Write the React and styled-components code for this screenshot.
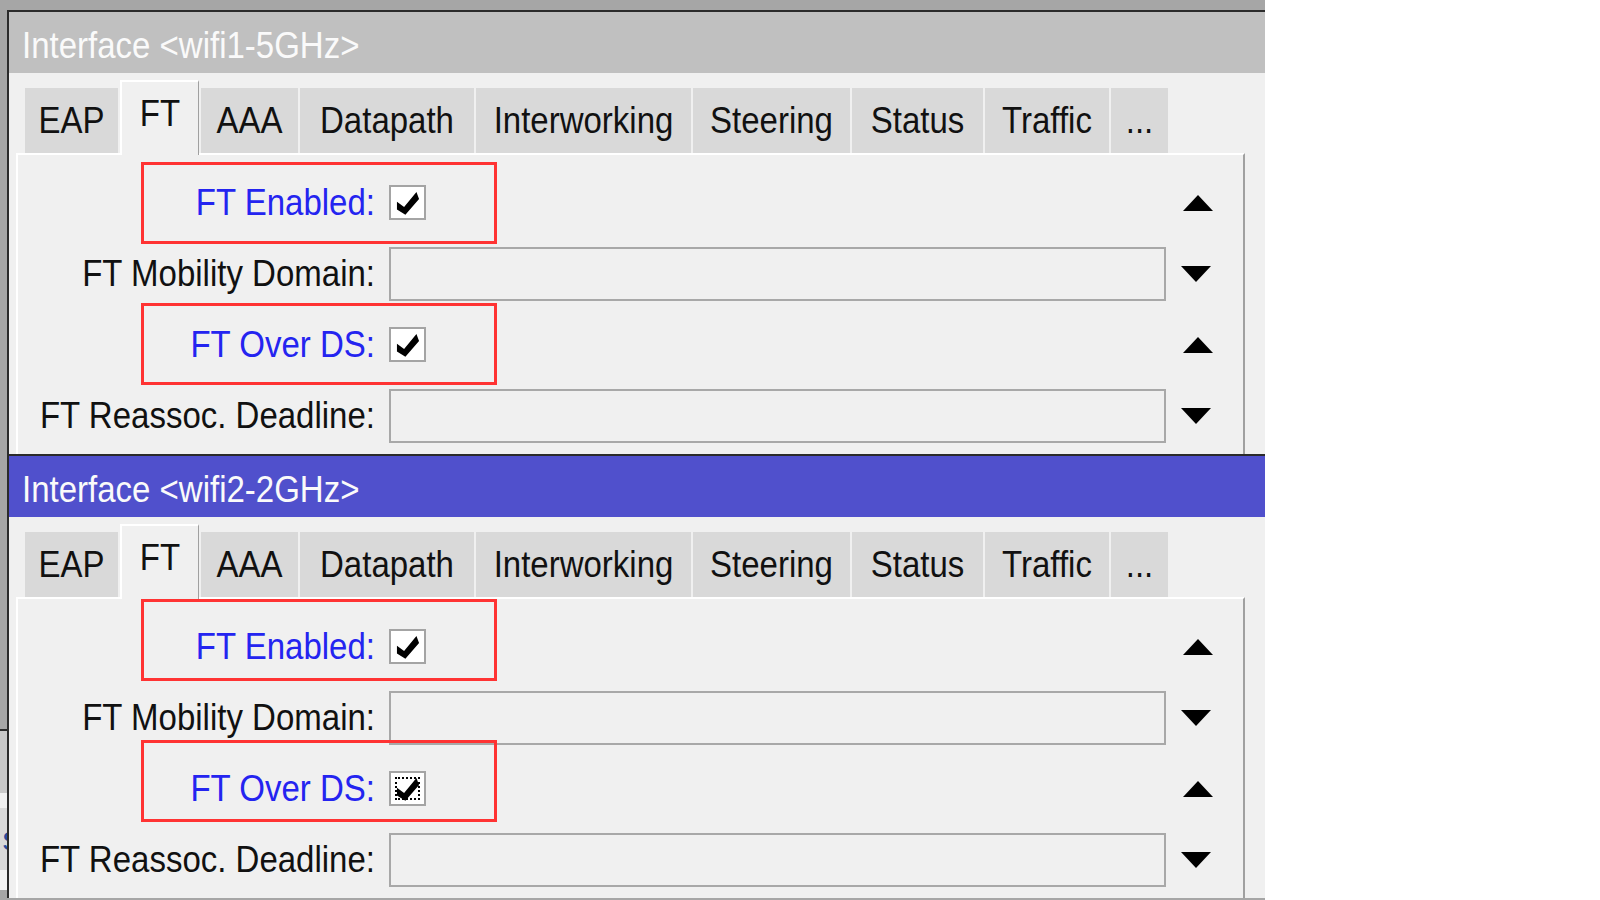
import React from 'react'
import styled, { createGlobalStyle } from 'styled-components'

const GlobalStyle = createGlobalStyle`
  html, body {
    margin: 0;
    padding: 0;
    background: #ffffff;
  }
  body {
    font-family: "Liberation Sans", Arial, sans-serif;
  }
`

const tabs = [
  { name: 'EAP', width: 93 },
  { name: 'FT', width: 79, selected: true },
  { name: 'AAA', width: 97 },
  { name: 'Datapath', width: 174 },
  { name: 'Interworking', width: 215 },
  { name: 'Steering', width: 157 },
  { name: 'Status', width: 131 },
  { name: 'Traffic', width: 124 },
  { name: '...', width: 57 },
]

const Desk = styled.div`
  width: 1265px;
  height: 900px;
  background: #a6a6a6;
  display: flex;
  overflow: hidden;
`

const SideStrip = styled.div`
  width: 7px;
  flex-shrink: 0;
  display: flex;
  flex-direction: column;
  overflow: hidden;
`

const StripPiece = styled.div`
  height: ${p => p.h}px;
  background: ${p => p.bg};
  flex-shrink: 0;
  overflow: hidden;
  display: flex;
  align-items: center;
  justify-content: flex-end;
`

const PeekChar = styled.span`
  font-size: 33px;
  color: #2a4a9a;
  margin-right: -12px;
`

const Stack = styled.div`
  flex: 1;
  padding-top: 10px;
  display: flex;
  flex-direction: column;
`

const Window = styled.section`
  height: 444px;
  flex-shrink: 0;
  box-sizing: border-box;
  border-top: 2px solid #2b2b2b;
  border-left: 2px solid #2b2b2b;
  background: #f0f0f0;
  display: flex;
  flex-direction: column;
  overflow: hidden;
`

// the screenshot text is a little taller than Arial at the same width
const Txt = styled.span`
  display: inline-block;
  transform: scaleY(1.1);
  white-space: nowrap;
`

const TitleBar = styled.div`
  height: 61px;
  flex-shrink: 0;
  box-sizing: border-box;
  padding: 7px 0 0 13px;
  display: flex;
  align-items: center;
  background: ${p => (p.$active ? '#5050cc' : '#c0c0c0')};
  color: #fafafa;
  font-size: 33px;
`

const TabStrip = styled.div`
  height: 80px;
  flex-shrink: 0;
  box-sizing: border-box;
  padding: 7px 0 0 16px;
  display: flex;
  align-items: flex-end;
  gap: 2px;
`

const Tab = styled.div`
  width: ${p => p.$w}px;
  height: ${p => (p.$selected ? 75 : 65)}px;
  margin-bottom: ${p => (p.$selected ? -2 : 0)}px;
  box-sizing: border-box;
  display: flex;
  align-items: center;
  justify-content: center;
  padding-bottom: ${p => (p.$selected ? 10 : 0)}px;
  background: ${p => (p.$selected ? '#f0f0f0' : '#d9d9d9')};
  border-top: ${p => (p.$selected ? '2px solid #ffffff' : 'none')};
  border-left: ${p => (p.$selected ? '2px solid #ffffff' : 'none')};
  border-right: ${p => (p.$selected ? '1px solid #a0a0a0' : 'none')};
  position: relative;
  z-index: ${p => (p.$selected ? 1 : 0)};
  font-size: 33px;
  color: #111;
`

const Panel = styled.div`
  flex: 1;
  margin-left: 7px;
  width: 1229px;
  box-sizing: border-box;
  border-top: 2px solid #ffffff;
  border-left: 2px solid #ffffff;
  border-right: 2px solid #a0a0a0;
  padding-top: 12px;
  display: flex;
  flex-direction: column;
`

const Row = styled.div`
  height: 71px;
  flex-shrink: 0;
  position: relative;
  display: grid;
  grid-template-columns: 357px 777px 34px;
  column-gap: 14px;
  align-items: center;
`

const Label = styled.label`
  text-align: right;
  font-size: 33px;
  color: ${p => (p.$blue ? '#2424f0' : '#111')};
`

const CheckBox = styled.div`
  width: 37px;
  height: 35px;
  box-sizing: border-box;
  border: 2px solid #a4a4a4;
  background: #ffffff;
  position: relative;
  display: flex;
  align-items: center;
  justify-content: center;
`

const FocusRing = styled.div`
  position: absolute;
  inset: 4px;
  border: 2px dotted #000;
`

const CheckMark = styled.svg`
  width: 26px;
  height: 26px;
  position: relative;
`

const Field = styled.div`
  height: 54px;
  box-sizing: border-box;
  border: 2px solid #a8a8a8;
  background: #f0f0f0;
`

const Arrow = styled.svg`
  width: 30px;
  height: 16px;
  display: block;
  margin-left: ${p => (p.$up ? 3 : 1)}px;
`

const Highlight = styled.div`
  position: absolute;
  left: 123px;
  top: ${p => p.$top}px;
  width: 356px;
  height: 82px;
  box-sizing: border-box;
  border: 3px solid #ff3333;
  pointer-events: none;
`

function Check() {
  return (
    <CheckMark viewBox="0 0 20 20">
      <polygon points="1.5,9 7,13 16.5,1.5 18.5,7 8,19 1.5,15" fill="#000" />
    </CheckMark>
  )
}

function Toggle({ up }) {
  return (
    <Arrow $up={up} viewBox="0 0 30 16">
      {up ? <polygon points="15,0 30,16 0,16" fill="#000" /> : <polygon points="0,0 30,0 15,16" fill="#000" />}
    </Arrow>
  )
}

function CheckRow({ label, focused, boxTop }) {
  return (
    <Row>
      <Label $blue><Txt>{label}</Txt></Label>
      <CheckBox>
        {focused && <FocusRing />}
        <Check />
      </CheckBox>
      <Toggle up />
      <Highlight $top={boxTop} />
    </Row>
  )
}

function FieldRow({ label }) {
  return (
    <Row>
      <Label><Txt>{label}</Txt></Label>
      <Field />
      <Toggle />
    </Row>
  )
}

function InterfaceWindow({ title, active, boxTop, focusLast }) {
  return (
    <Window>
      <TitleBar $active={active}><Txt>{title}</Txt></TitleBar>
      <TabStrip>
        {tabs.map(t => (
          <Tab key={t.name} $w={t.width} $selected={t.selected}>
            <Txt>{t.name}</Txt>
          </Tab>
        ))}
      </TabStrip>
      <Panel>
        <CheckRow label="FT Enabled:" boxTop={boxTop} />
        <FieldRow label="FT Mobility Domain:" />
        <CheckRow label="FT Over DS:" boxTop={boxTop - 1} focused={focusLast} />
        <FieldRow label="FT Reassoc. Deadline:" />
      </Panel>
    </Window>
  )
}

export default function App() {
  return (
    <>
      <GlobalStyle />
      <Desk>
        <SideStrip>
          <StripPiece h={729} bg="#a6a6a6" />
          <StripPiece h={2} bg="#2b2b2b" />
          <StripPiece h={62} bg="#c8c8c8" />
          <StripPiece h={15} bg="#f0f0f0" />
          <StripPiece h={62} bg="#d9d9d9">
            <PeekChar>s</PeekChar>
          </StripPiece>
          <StripPiece h={20} bg="#f4f4f4" />
          <StripPiece h={10} bg="#a6a6a6" />
        </SideStrip>
        <Stack>
          <InterfaceWindow title="Interface <wifi1-5GHz>" boxTop={-5} />
          <InterfaceWindow title="Interface <wifi2-2GHz>" active boxTop={-12} focusLast />
        </Stack>
      </Desk>
    </>
  )
}
